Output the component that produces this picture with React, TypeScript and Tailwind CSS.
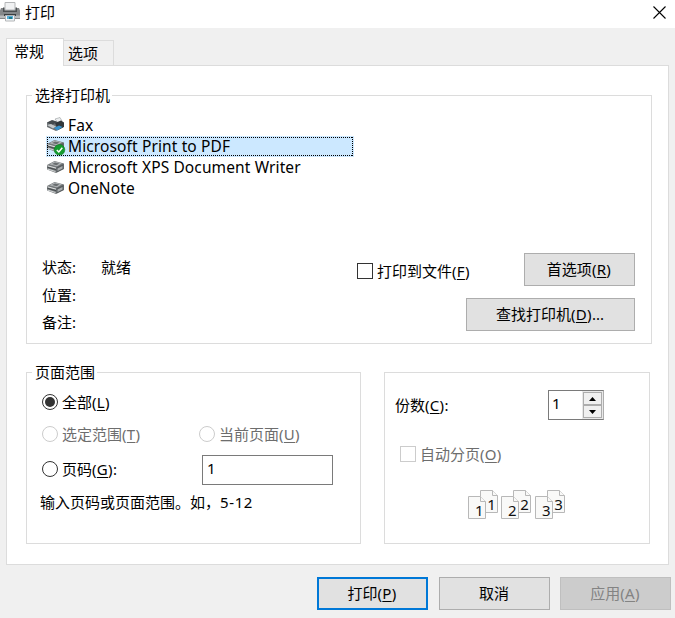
import React from "react";

function Key({ k }: { k: string }) {
  return (
    <span className="tracking-[0.3px]">
      (<span className="underline decoration-1 underline-offset-2">{k}</span>)
    </span>
  );
}

function TitlePrinter() {
  return (
    <svg width="20" height="22" viewBox="0 0 20 22" className="block shrink-0">
      <path d="M5 10V2.500h10V10z" fill="#f1f2f3" stroke="#b4b6b8" />
      <path d="M1 8h2.500l1 2h11l1-2H19l1 2.500V19H0v-8.500z" fill="#85888a" />
      <path d="M3 7.500h1.500V11h11V7.500H17V12H3z" fill="#4c5052" />
      <path d="M0 15.500h20V18H0z" fill="#b9bcbe" />
      <path d="M4 14h12v2H4z" fill="#3b3f41" />
      <path d="M5.500 15.500h9v5.500h-9z" fill="#f2f5f7" stroke="#b4b6b8" />
      <path d="M7 16h6v3H7z" fill="#5aaed8" />
      <path d="M9 17h3v2H9z" fill="#1f7a86" />
    </svg>
  );
}

function SmallPrinter({ kind }: { kind: "fax" | "check" | "plain" }) {
  return (
    <svg width="20" height="21" viewBox="0 0 20 21" className="block shrink-0">
      {kind === "fax" ? (
        <>
          <path d="m1 7.500 6-2 10 2v5l-7 3.500-9-4z" fill="#6b7073" />
          <path d="m1 7.500 5-2.500 5 2-5 3z" fill="#43494d" />
          <path d="m9 4 5-1.500 2 3.500-4 2z" fill="#eceeef" stroke="#858a8d" strokeWidth=".5" />
          <path d="m9 8 6-2.500 3 2v4.500l-6 3z" fill="#31373b" />
          <path d="m1 10 4-1 5 2.500-3 2z" fill="#c4c8ca" />
          <path d="m8 13 5-2.500 3.500 1.500-5 3.500z" fill="#3792cc" />
        </>
      ) : (
        <>
          <path d="m1 8 7.500-4L18 6.500V12l-8 4-9-3.500z" fill="#74787a" />
          <path d="m3.500 7.200 5-2.800L16 6.200l-5 3z" fill="#b4b8ba" />
          <path d="m6 7 3-1.600 4.500 1-3 1.800z" fill="#6a6e70" />
          <path d="m1.500 8.800 8.500 2.300" stroke="#e2e4e4" strokeWidth="1" />
          <path d="m1.500 10.300 8.500 2.400" stroke="#414648" strokeWidth=".9" />
          <path d="m1.500 12 8 2.600" stroke="#d2d5d6" strokeWidth="1.100" />
          <path d="m10.500 10.300 7-3.300V12l-7 3.500z" fill="#575c5f" />
          <path d="m11.500 11.500 5-2.400v2.400l-5 2.500z" fill="#a9adaf" />
        </>
      )}
      {kind === "check" && (
        <>
          <circle cx="13.500" cy="13.800" r="5.300" fill="#149b2f" stroke="#087c1b" strokeWidth=".6" />
          <path d="m10.800 14 2 2 3.500-4.200" fill="none" stroke="#fff" strokeWidth="1.500" />
        </>
      )}
    </svg>
  );
}

function Radio({ on, off }: { on?: boolean; off?: boolean }) {
  return (
    <svg width="16" height="16" viewBox="0 0 16 16" className="block shrink-0">
      <circle cx="8" cy="8" r="7.500" fill="#fff" stroke={off ? "#ccc" : "#333"} />
      {on && <circle cx="8" cy="8" r="5" fill="#333" />}
    </svg>
  );
}

function Pages({ n, className }: { n: number; className: string }) {
  return (
    <svg viewBox="0 0 34 32" preserveAspectRatio="xMinYMin slice" className={"block h-8 shrink-0 overflow-visible " + className}>
      <g fill="#f9f9f8" stroke="#b8b8b8">
        <path d="M12.500 1.500h12l5 5v17h-17z" />
        <path d="M24.500 1.500v5h5" />
        <path d="M.5 7.500h12l5 5v17H.5z" />
        <path d="M12.500 7.500v5h5" />
      </g>
      <g fill="#111" fontFamily="Noto Sans, sans-serif" fontSize="15">
        <text x="7" y="27">{n}</text>
        <text x="19.200" y="21">{n}</text>
      </g>
    </svg>
  );
}

function Button({ className, children }: { className: string; children: React.ReactNode }) {
  return (
    <button className={"flex h-[33px] items-center justify-center border pb-px pr-px " + className}>
      <span>{children}</span>
    </button>
  );
}

const printers: { name: string; kind: "fax" | "check" | "plain" }[] = [
  { name: "Fax", kind: "fax" },
  { name: "Microsoft Print to PDF", kind: "check" },
  { name: "Microsoft XPS Document Writer", kind: "plain" },
  { name: "OneNote", kind: "plain" },
];

export default function App() {
  return (
    <div className="flex h-[618px] w-[675px] flex-col overflow-hidden whitespace-nowrap bg-[#f0f0f0] font-['Noto_Sans','Noto_Sans_CJK_SC',sans-serif] text-[15px] leading-5 text-black">
      <header className="flex h-7 shrink-0 items-start justify-between bg-white pr-[9px]">
        <div className="flex">
          <TitlePrinter />
          <span className="ml-[5px] mt-[2px]">打印</span>
        </div>
        <svg width="13" height="13" viewBox="0 0 13 13" className="mt-[6px]">
          <path d="m.5.5 12 12m0-12-12 12" stroke="#000" strokeWidth="1.100" />
        </svg>
      </header>

      <nav className="flex h-[38px] shrink-0 items-end pl-[6px]">
        <div className="z-10 h-[28px] w-[58px] border border-b-0 border-[#dcdcdc] bg-white pl-[7px] pt-[2px]">常规</div>
        <div className="h-[26px] w-[50px] border border-l-0 border-[#dcdcdc] pl-[4px] pt-[2px]">选项</div>
      </nav>

      <main className="ml-[6px] mt-[-1px] h-[500px] w-[663px] shrink-0 border border-[#dcdcdc] bg-white pl-[19px] pt-[29px]">
        <section className="h-[249px] w-[626px] border border-[#dcdcdc]">
          <h2 className="-mt-[11px] ml-[5px] w-fit bg-white pl-[3px] pr-[2px]">选择打印机</h2>
          <ul className="ml-[19px] mt-[10px] w-[308px]">
            {printers.map((p) => (
              <li key={p.name} className={"relative flex h-[21px] items-center " + (p.kind === "check" ? "bg-[#cce8ff]" : "")}>
                <SmallPrinter kind={p.kind} />
                <span className="mb-px ml-[2px] text-[15.5px] tracking-[0.12px]">{p.name}</span>
                {p.kind === "check" && (
                  <svg width="308" height="21" className="absolute left-0 top-0">
                    <g stroke="#000" strokeDasharray="1 1" shapeRendering="crispEdges">
                      <path d="M1 1.500h306M1 19.500h306M1.500 1v19M306.500 1v19" />
                    </g>
                  </svg>
                )}
              </li>
            ))}
          </ul>
          <div className="mt-[54px] flex pl-[15px] pr-4">
            <dl className="mt-[4px] w-[315px]">
              <div className="flex h-7"><dt className="w-[59px]">状态:</dt><dd>就绪</dd></div>
              <div className="h-[27px]"><dt>位置:</dt></div>
              <div><dt>备注:</dt></div>
            </dl>
            <div className="flex grow flex-col gap-3">
              <div className="flex justify-between">
                <label className="mt-[8px] flex h-5 items-center">
                  <span className="mr-1 size-4 border border-[#333]" />
                  <span>打印到文件<Key k="F" /></span>
                </label>
                <Button className="w-[111px] border-[#adadad] bg-[#e1e1e1]">首选项<Key k="R" /></Button>
              </div>
              <Button className="w-[169px] self-end border-[#adadad] bg-[#e1e1e1]">查找打印机<Key k="D" />...</Button>
            </div>
          </div>
        </section>

        <div className="mt-7 flex gap-[23px]">
          <section className="h-[172px] w-[335px] border border-[#dcdcdc]">
            <h2 className="-mt-[11px] ml-[5px] w-fit bg-white pl-[3px] pr-[2px]">页面范围</h2>
            <div className="ml-[15px] mt-[10px] flex h-5 items-center gap-1"><Radio on /><span>全部<Key k="L" /></span></div>
            <div className="ml-[15px] mt-3 flex h-5 items-center text-[#6d6d6d]">
              <div className="flex w-[157px] items-center gap-1"><Radio off /><span>选定范围<Key k="T" /></span></div>
              <div className="flex items-center gap-1"><Radio off /><span>当前页面<Key k="U" /></span></div>
            </div>
            <div className="ml-[15px] mt-[11px] flex h-[30px] items-center">
              <div className="mb-[2px] flex w-[160px] items-center gap-1"><Radio /><span>页码<Key k="G" />:</span></div>
              <div className="h-[30px] w-[131px] border border-[#7a7a7a] pl-1 pt-[2px]">1</div>
            </div>
            <p className="ml-[13px] mt-[7px]">输入页码或页面范围。如，<span className="tracking-[0.6px]">5-12</span></p>
          </section>

          <section className="h-[172px] w-[266px] border border-[#dcdcdc] pl-[10px] pt-[17px]">
            <div className="flex h-[30px] items-center">
              <span className="w-[153px]">份数<Key k="C" />:</span>
              <div className="flex h-[30px] w-[56px] border border-r-[#adadad] border-b-[#7a7a7a] border-l-[#7a7a7a] border-t-[#7a7a7a]">
                <span className="w-[33px] pl-[3px] pt-[2px]">1</span>
                <div className="flex h-7 w-[21px] flex-col border border-[#e8e8e8]">
                  {[0, 1].map((i) => (
                    <div key={i} className="flex h-[13px] w-[19px] items-center justify-center border border-[#adadad] bg-[#f0f0f0]">
                      <svg width="7" height="4" viewBox="0 0 7 4"><path d={i ? "M0 0h7L3.500 4z" : "M0 4h7L3.500 0z"} /></svg>
                    </div>
                  ))}
                </div>
              </div>
            </div>
            <div className="ml-[5px] mt-6 flex h-5 items-center text-[#6d6d6d]">
              <span className="mr-1 size-4 border border-[#ccc]" />
              <span>自动分页<Key k="O" /></span>
            </div>
            <div className="ml-[73px] mt-[25px] flex">
              <Pages n={1} className="w-[33px]" />
              <Pages n={2} className="w-[34px]" />
              <Pages n={3} className="w-[34px]" />
            </div>
          </section>
        </div>
      </main>

      <footer className="mt-3 flex pl-[317px]">
        <Button className="w-[111px] border-2 border-[#0078d7] bg-[#e1e1e1]">打印<Key k="P" /></Button>
        <Button className="ml-[11px] w-[111px] border-[#adadad] bg-[#e1e1e1]">取消</Button>
        <Button className="ml-[10px] w-[111px] border-[#bfbfbf] bg-[#ccc] text-[#838383]">应用<Key k="A" /></Button>
      </footer>
    </div>
  );
}
